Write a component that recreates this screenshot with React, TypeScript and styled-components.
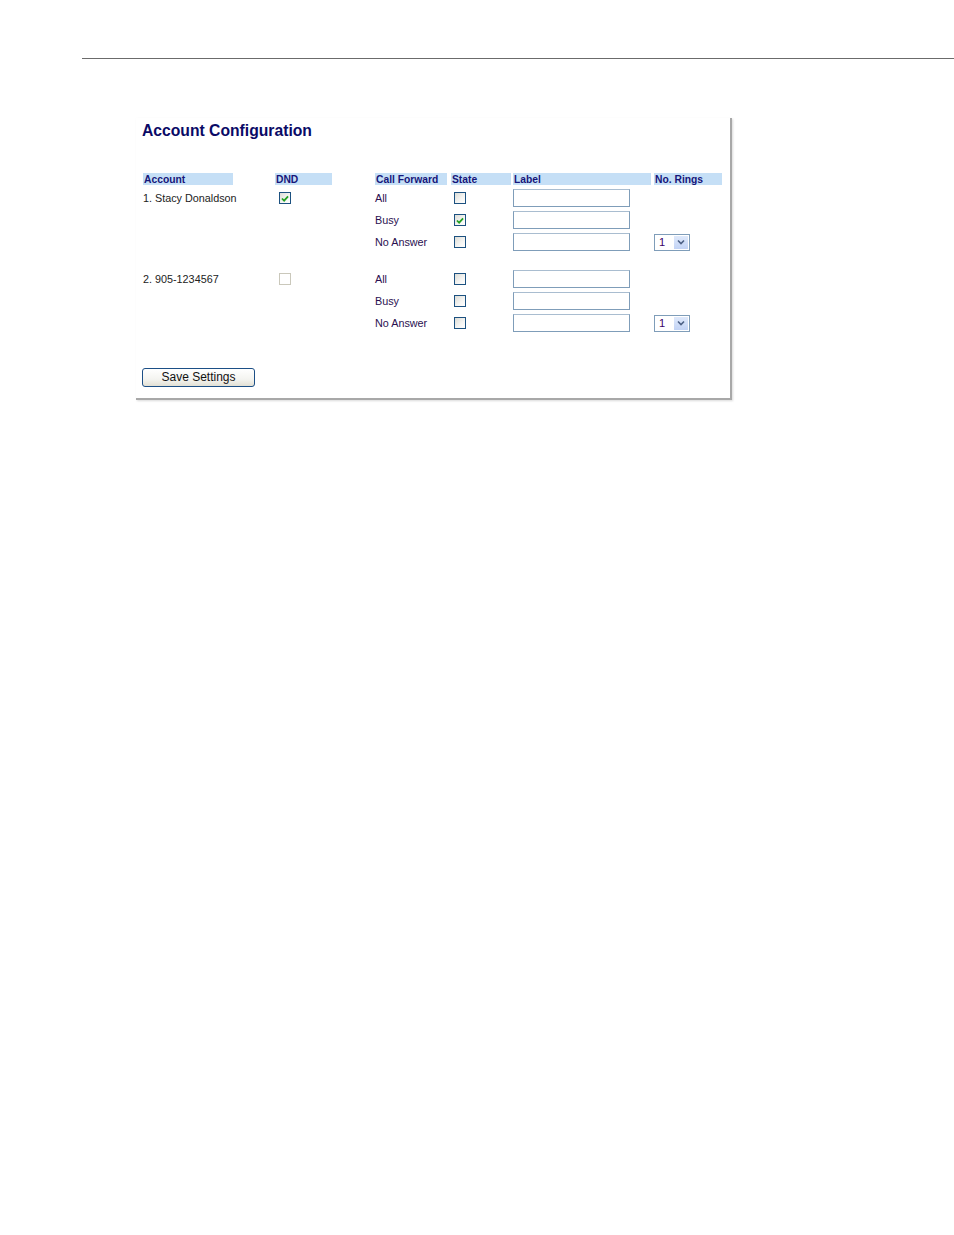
import React from "react";
import styled, { createGlobalStyle } from "styled-components";

const Global = createGlobalStyle`
  html, body { margin: 0; padding: 0; background: #fff; }
  body { font-family: "Liberation Sans", Arial, sans-serif; }
`;

const Page = styled.div`
  width: 954px;
  min-height: 1235px;
  padding-top: 58px;
  box-sizing: border-box;
`;

const Rule = styled.div`
  margin-left: 82px;
  height: 1px;
  background: #6b6b6b;
`;

const Panel = styled.div`
  margin-top: 59px;
  margin-left: 136px;
  width: 596px;
  box-sizing: border-box;
  padding: 3px 0 11px 6px;
  background: #fff;
  border-right: 2px solid #a8a8a8;
  border-bottom: 2px solid #a8a8a8;
  box-shadow: 1px 1px 2px rgba(0, 0, 0, 0.15);
`;

const Title = styled.h1`
  margin: 0;
  font-size: 15.7px;
  line-height: 19px;
  font-weight: bold;
  color: #0a0a66;
`;

const Grid = styled.div`
  margin-top: 33px;
  margin-left: 1px;
  display: grid;
  grid-template-columns: 132px 100px 76px 62px 141px 68px;
  grid-auto-rows: auto;
`;

const HeaderCell = styled.div<{ $w: number }>`
  width: ${(p) => p.$w}px;
  height: 12px;
  background: #c5dff6;
  font-size: 10.3px;
  line-height: 13px;
  font-weight: bold;
  color: #16167a;
  padding-left: 1px;
  white-space: nowrap;
  overflow: hidden;
  box-sizing: border-box;
`;

const Spacer = styled.div<{ $h: number }>`
  grid-column: 1 / -1;
  height: ${(p) => p.$h}px;
`;

const Cell = styled.div`
  height: 22px;
  display: flex;
  align-items: center;
  font-size: 10.8px;
  color: #222;
  white-space: nowrap;
`;

const FwdLabel = styled(Cell)`
  color: #2a1050;
`;

const CheckCell = styled(Cell)<{ $pad: number }>`
  padding-left: ${(p) => p.$pad}px;
`;

const Box = styled.span<{ $disabled?: boolean }>`
  width: 12px;
  height: 12px;
  box-sizing: border-box;
  border: 1px solid ${(p) => (p.$disabled ? "#cac8bb" : "#1c5180")};
  background: ${(p) =>
    p.$disabled ? "#fff" : "linear-gradient(135deg, #dcdcd6 0%, #f5f5f3 60%, #fff 100%)"};
  display: inline-flex;
  align-items: center;
  justify-content: center;
`;

const TextInput = styled.div`
  width: 117px;
  height: 18px;
  box-sizing: border-box;
  border: 1px solid #7f9db9;
  border-top-color: #a9bdd0;
  background: #fff;
`;

const Select = styled.div`
  width: 36px;
  height: 17px;
  box-sizing: border-box;
  border: 1px solid #7f9db9;
  background: #fff;
  display: flex;
  align-items: stretch;
  font-size: 11px;
  color: #3a0066;
`;

const SelectValue = styled.span`
  flex: 1;
  padding-left: 4px;
  line-height: 15px;
`;

const SelectBtn = styled.span`
  width: 14px;
  margin: 1px;
  background: linear-gradient(180deg, #dfe9fb 0%, #c2d3f5 100%);
  display: flex;
  align-items: center;
  justify-content: center;
`;

const ButtonRow = styled.div`
  margin-top: 33px;
`;

const Button = styled.button`
  width: 113px;
  height: 19px;
  padding: 0;
  border: 1px solid #1c4f86;
  border-radius: 3px;
  background: linear-gradient(180deg, #ffffff 0%, #f4f4f0 60%, #e2e0d4 100%);
  font-family: "Liberation Sans", Arial, sans-serif;
  font-size: 12px;
  color: #111;
  line-height: 17px;
`;

const Check = () => (
  <svg width="8" height="7" viewBox="0 0 9 8">
    <path d="M1 4 L3.5 6.5 L8 1.5" fill="none" stroke="#21a121" strokeWidth="2" />
  </svg>
);

const Chevron = () => (
  <svg width="8" height="6" viewBox="0 0 8 6">
    <path d="M1 1.5 L4 4.5 L7 1.5" fill="none" stroke="#4d6185" strokeWidth="1.6" />
  </svg>
);

const CheckBox = ({ checked, disabled }: { checked?: boolean; disabled?: boolean }) => (
  <Box $disabled={disabled}>{checked ? <Check /> : null}</Box>
);

type Fwd = { name: string; state: boolean; rings?: boolean };

const accounts: { name: string; dnd: boolean; dndDisabled?: boolean; fwd: Fwd[] }[] = [
  {
    name: "1. Stacy Donaldson",
    dnd: true,
    fwd: [
      { name: "All", state: false },
      { name: "Busy", state: true },
      { name: "No Answer", state: false, rings: true },
    ],
  },
  {
    name: "2. 905-1234567",
    dnd: false,
    dndDisabled: true,
    fwd: [
      { name: "All", state: false },
      { name: "Busy", state: false },
      { name: "No Answer", state: false, rings: true },
    ],
  },
];

export default function App() {
  return (
    <Page>
      <Global />
      <Rule />
      <Panel>
        <Title>Account Configuration</Title>
        <Grid>
          <HeaderCell $w={90}>Account</HeaderCell>
          <HeaderCell $w={57}>DND</HeaderCell>
          <HeaderCell $w={72}>Call Forward</HeaderCell>
          <HeaderCell $w={60}>State</HeaderCell>
          <HeaderCell $w={138}>Label</HeaderCell>
          <HeaderCell $w={68}>No. Rings</HeaderCell>
          <Spacer $h={2} />
          {accounts.map((a, ai) => (
            <React.Fragment key={a.name}>
              {ai > 0 && <Spacer $h={15} />}
              {a.fwd.map((f, fi) => (
                <React.Fragment key={f.name}>
                  <Cell>{fi === 0 ? a.name : ""}</Cell>
                  <CheckCell $pad={4}>
                    {fi === 0 ? <CheckBox checked={a.dnd} disabled={a.dndDisabled} /> : null}
                  </CheckCell>
                  <FwdLabel>{f.name}</FwdLabel>
                  <CheckCell $pad={3}>
                    <CheckBox checked={f.state} />
                  </CheckCell>
                  <Cell>
                    <TextInput />
                  </Cell>
                  <Cell>
                    {f.rings ? (
                      <Select>
                        <SelectValue>1</SelectValue>
                        <SelectBtn>
                          <Chevron />
                        </SelectBtn>
                      </Select>
                    ) : null}
                  </Cell>
                </React.Fragment>
              ))}
            </React.Fragment>
          ))}
        </Grid>
        <ButtonRow>
          <Button>Save Settings</Button>
        </ButtonRow>
      </Panel>
    </Page>
  );
}
